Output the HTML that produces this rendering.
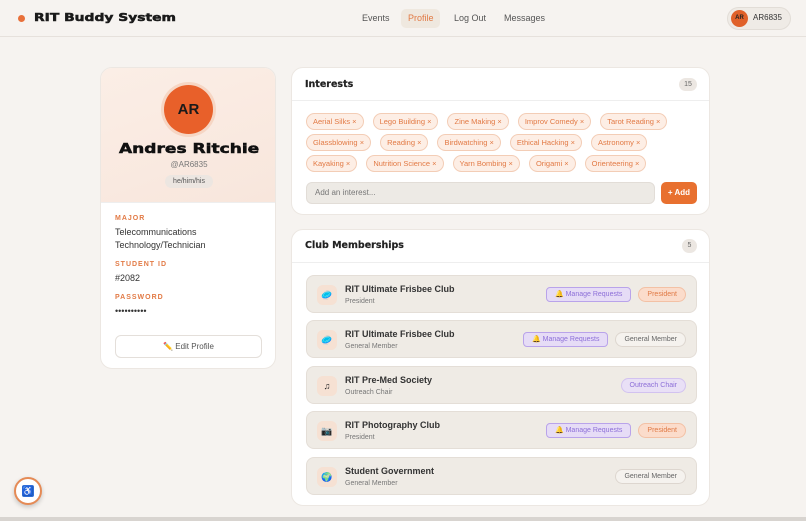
<!DOCTYPE html><html><head><style>
*{box-sizing:border-box;margin:0;padding:0}
body{width:806px;height:521px;overflow:hidden;background:#f6f3f0;font-family:"Liberation Sans",sans-serif;position:relative;color:#222}
.hdr{position:absolute;left:0;top:0;width:806px;height:37px;border-bottom:1px solid #e6e1dc;background:#f6f3f0}
.abs{position:absolute}
.card{position:absolute;background:#fff;border:1px solid #ece7e2;border-radius:12px;overflow:hidden}
.tags{display:flex;flex-wrap:wrap;row-gap:4px;column-gap:9px}
.tag{display:block;height:17px;line-height:15px;padding:0 6px;border:1px solid #f3cdb6;background:#fdeee5;color:#e27a45;font-size:7.5px;border-radius:9px;white-space:nowrap}
.row{position:absolute;left:14px;width:391px;height:38px;background:#efebe5;border:1px solid #e4ded7;border-radius:8px}
.ic{position:absolute;left:10px;top:9px;width:20px;height:20px;border-radius:6px;background:#f6e1d3;font-size:9px;text-align:center;line-height:20px}
.nm{position:absolute;left:38px;top:8px;font-size:9px;font-weight:bold;color:#333}
.rl{position:absolute;left:38px;top:22px;font-size:7px;color:#777}
.pills{position:absolute;right:10px;top:11px;display:flex;gap:7px}
.pill{height:15px;line-height:13px;font-size:7px;border-radius:8px;padding:0 8px;border:1px solid;white-space:nowrap}
.mr{background:#e6dcf6;border-color:#b9a3ea;color:#8d6fd8;border-radius:4px}
.pres{background:#fbdccb;border-color:#f3c1a5;color:#e07a45}
.gen{background:#f5f2ee;border-color:#ddd6cf;color:#666}
.lbl{font-size:7px;color:#e27a45;letter-spacing:1px;font-weight:bold}
.val{font-size:9px;color:#333;margin-top:4px;line-height:13px}
.wide{display:inline-block;font-family:"DejaVu Sans",sans-serif;font-weight:bold;-webkit-text-stroke:.5px currentColor;transform-origin:left center;white-space:nowrap}
</style></head><body>
<div class="hdr">
<div class="abs" style="left:18px;top:15px;width:7px;height:7px;border-radius:50%;background:#e8703a"></div>
<div class="abs wide" style="left:34px;top:11px;font-size:11px;color:#1a1a1a;transform:scaleX(1.26)">RIT Buddy System</div>
<div class="abs" style="left:362px;top:13px;font-size:9px;color:#555">Events</div>
<div class="abs" style="left:401px;top:9px;width:39px;height:19px;border-radius:5px;background:#efe8df"></div>
<div class="abs" style="left:408px;top:13px;font-size:9px;color:#e27a45">Profile</div>
<div class="abs" style="left:454px;top:13px;font-size:9px;color:#555">Log Out</div>
<div class="abs" style="left:504px;top:13px;font-size:9px;color:#555">Messages</div>
<div class="abs" style="left:727px;top:7px;width:64px;height:23px;border-radius:12px;background:#efebe6;border:1px solid #e2ddd7"></div>
<div class="abs" style="left:731px;top:10px;width:17px;height:17px;border-radius:50%;background:#e0612a;color:#222;font-size:6px;font-weight:bold;text-align:center;line-height:17px">AR</div>
<div class="abs" style="left:753px;top:13px;font-size:8px;color:#333">AR6835</div>
</div>

<div class="card" style="left:100px;top:67px;width:176px;height:302px">
<div style="height:135px;background:linear-gradient(160deg,#fbeee6,#f8e6dc);border-bottom:1px solid #eee"></div>
<div class="abs" style="left:63px;top:17px;width:49px;height:49px;border-radius:50%;background:#e8602a;box-shadow:0 0 0 3px #f6d6c4;text-align:center;line-height:49px;font-weight:900;font-size:15px;color:#1a1a1a">AR</div>
<div class="abs wide" style="left:18px;top:74px;font-size:13px;color:#111;transform:scaleX(1.31)">Andres Ritchie</div>
<div class="abs" style="left:0;width:176px;top:92px;text-align:center;font-size:8px;color:#777">@AR6835</div>
<div class="abs" style="left:64px;top:107px;width:48px;height:13px;border-radius:7px;background:#ece6e1;font-size:7px;color:#555;text-align:center;line-height:13px">he/him/his</div>
<div class="abs" style="left:14px;top:147px;width:150px">
<div class="lbl">MAJOR</div><div class="val">Telecommunications<br>Technology/Technician</div>
<div class="lbl" style="margin-top:9px">STUDENT ID</div><div class="val">#2082</div>
<div class="lbl" style="margin-top:9px">PASSWORD</div><div class="val">••••••••••</div>
</div>
<div class="abs" style="left:14px;top:267px;width:147px;height:23px;border:1px solid #e4dfda;border-radius:6px;text-align:center;line-height:21px;font-size:8px;color:#555">✏️ Edit Profile</div>
</div>

<div class="card" style="left:291px;top:67px;width:419px;height:148px">
<div style="height:33px;border-bottom:1px solid #eee"></div>
<div class="abs wide" style="left:13px;top:11px;font-size:9.5px;color:#222;-webkit-text-stroke:.2px #222">Interests</div>
<div class="abs" style="left:387px;top:10px;width:18px;height:13px;border-radius:7px;background:#ece7e2;font-size:7px;color:#666;text-align:center;line-height:13px">15</div>
<div class="abs tags" style="left:14px;top:45px;width:395px">
<span class="tag">Aerial Silks ×</span><span class="tag">Lego Building ×</span><span class="tag">Zine Making ×</span><span class="tag">Improv Comedy ×</span><span class="tag">Tarot Reading ×</span>
<span class="tag">Glassblowing ×</span><span class="tag">Reading ×</span><span class="tag">Birdwatching ×</span><span class="tag">Ethical Hacking ×</span><span class="tag">Astronomy ×</span>
<span class="tag">Kayaking ×</span><span class="tag">Nutrition Science ×</span><span class="tag">Yarn Bombing ×</span><span class="tag">Origami ×</span><span class="tag">Orienteering ×</span>
</div>
<div class="abs" style="left:14px;top:114px;width:349px;height:22px;border-radius:6px;background:#edeae5;border:1px solid #e2ddd7;font-size:8px;color:#777;padding-left:8px;line-height:20px">Add an interest...</div>
<div class="abs" style="left:369px;top:114px;width:36px;height:22px;border-radius:5px;background:#e8702f;color:#fff;font-size:8px;font-weight:bold;text-align:center;line-height:22px">+ Add</div>
</div>

<div class="card" style="left:291px;top:229px;width:419px;height:277px">
<div style="height:33px;border-bottom:1px solid #eee"></div>
<div class="abs wide" style="left:13px;top:10px;font-size:9.5px;color:#222;-webkit-text-stroke:.2px #222">Club Memberships</div>
<div class="abs" style="left:390px;top:9px;width:15px;height:14px;border-radius:7px;background:#ece7e2;font-size:7px;color:#666;text-align:center;line-height:14px">5</div>
<div class="row" style="top:45px"><div class="ic">🥏</div><div class="nm">RIT Ultimate Frisbee Club</div><div class="rl">President</div><div class="pills"><div class="pill mr">🔔 Manage Requests</div><div class="pill pres">President</div></div></div>
<div class="row" style="top:90px"><div class="ic">🥏</div><div class="nm">RIT Ultimate Frisbee Club</div><div class="rl">General Member</div><div class="pills"><div class="pill mr">🔔 Manage Requests</div><div class="pill gen">General Member</div></div></div>
<div class="row" style="top:136px"><div class="ic">♫</div><div class="nm">RIT Pre-Med Society</div><div class="rl">Outreach Chair</div><div class="pills"><div class="pill mr" style="border-radius:8px;background:#e9e0f6;border-color:#d2c2f0">Outreach Chair</div></div></div>
<div class="row" style="top:181px"><div class="ic">📷</div><div class="nm">RIT Photography Club</div><div class="rl">President</div><div class="pills"><div class="pill mr">🔔 Manage Requests</div><div class="pill pres">President</div></div></div>
<div class="row" style="top:227px"><div class="ic">🌍</div><div class="nm">Student Government</div><div class="rl">General Member</div><div class="pills"><div class="pill gen">General Member</div></div></div>
</div>

<div class="abs" style="left:14px;top:477px;width:28px;height:28px;border-radius:50%;background:#fff;border:2px solid #e58a55;box-shadow:0 2px 5px rgba(0,0,0,.2)"></div>
<div class="abs" style="left:22px;top:485px;width:12px;height:12px;border-radius:2px;background:#2f6ed8;color:#fff;font-size:9px;text-align:center;line-height:12px">♿</div>
<div class="abs" style="left:0;top:517px;width:806px;height:4px;background:#d8d4d0"></div>
</body></html>
